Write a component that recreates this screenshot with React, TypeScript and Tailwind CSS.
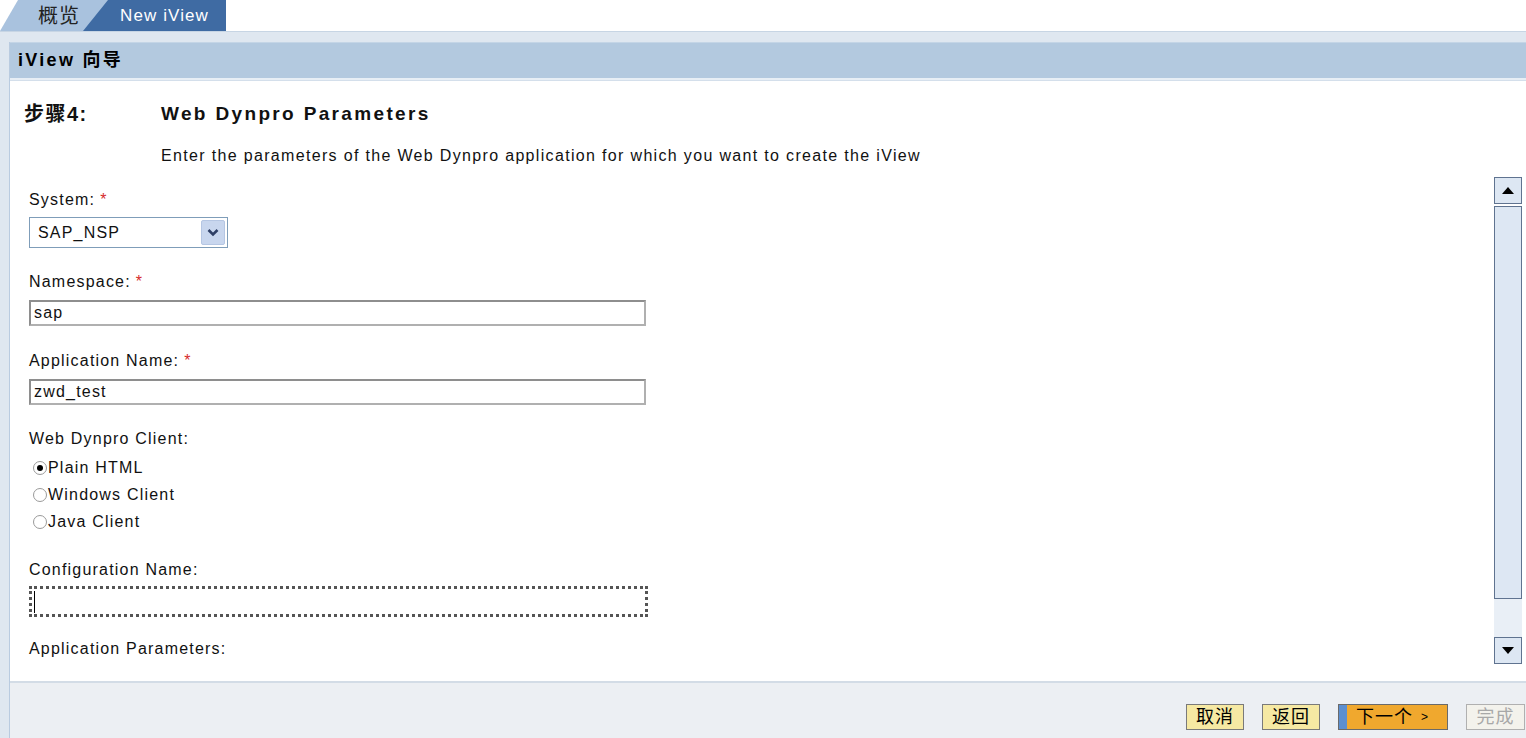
import React from "react";

const F = { fontFamily: '"Liberation Sans", "Noto Sans CJK SC", Arial, sans-serif' };

function Star() {
  return <span className="text-[#d62b2b] ml-[5px]">*</span>;
}

function Radio({ checked, label }: { checked?: boolean; label: string }) {
  return (
    <div className="flex items-center h-[27px]">
      <span className="relative w-[14px] h-[14px] rounded-full border border-[#9a9a9a] bg-white flex items-center justify-center mr-[1px]">
        {checked && <span className="w-[6px] h-[6px] rounded-full bg-black" />}
      </span>
      <span>{label}</span>
    </div>
  );
}

export default function App() {
  return (
    <div className="w-[1526px] h-[738px] overflow-hidden bg-white flex flex-col text-[16px] tracking-[1.2px] text-[#111]" style={F}>
      {/* Tabs */}
      <div className="h-[31px] flex items-end relative bg-white shrink-0">
        <div className="absolute left-0 top-0 h-[31px] w-[110px] bg-[#a9c2de] [clip-path:polygon(0_100%,18px_0,100%_0,100%_100%)]" />
        <div className="absolute left-[38px] top-0 h-[31px] flex items-center text-[20px] tracking-[1px] text-[#222]">概览</div>
        <div className="absolute left-[83px] top-0 h-[31px] w-[143px] bg-[#3f6ba3] [clip-path:polygon(0_100%,25px_0,100%_0,100%_100%)]" />
        <div className="absolute left-[120px] top-0 h-[31px] flex items-center text-[17px] tracking-[1.1px] text-white">New iView</div>
      </div>

      <div className="flex-1 flex flex-col bg-[#dfe7f0] min-h-0">
        <div className="h-[11px] shrink-0 border-t border-[#c7d5e4]" />
        <div className="flex-1 flex min-h-0">
          <div className="w-[10px] shrink-0 bg-[#dfe7f0] border-r border-[#b9cbe0]" />
          <div className="flex-1 flex flex-col min-h-0">
            {/* header bar */}
            <div className="h-[38px] shrink-0 bg-[#b3c9df] border-t border-[#c4d5e6] border-b-2 border-b-[#e7eef5] flex items-center pl-[8px] font-bold text-[18px] tracking-[2.3px] text-black">
              iView 向导
            </div>
            {/* content */}
            <div className="flex-1 bg-white flex min-h-0 border-t border-[#d4dfeb]">
              <div className="flex-1 flex flex-col">
                <div className="flex items-center pl-[14px] pt-[22px] h-[44px] font-bold text-[19px] text-[#111]">
                  <span className="w-[137px] tracking-[1.5px] text-[20px]">步骤4:</span>
                  <span className="tracking-[2.35px]">Web Dynpro Parameters</span>
                </div>
                <div className="pl-[151px] mt-[21px] h-[20px] leading-[20px] tracking-[1.33px]">
                  Enter the parameters of the Web Dynpro application for which you want to create the iView
                </div>
                <div className="pl-[19px] flex flex-col">
                  <div className="mt-[24px] h-[20px] leading-[20px]">System:<Star /></div>
                  <div className="mt-[7px] w-[199px] h-[31px] border border-[#7f9db9] bg-white flex items-center justify-between pl-[8px] pr-[2px]">
                    <span>SAP_NSP</span>
                    <span className="w-[24px] h-[25px] bg-[#c8d6ee] border border-[#b5c6e3] rounded-[2px] flex items-center justify-center">
                      <svg width="12" height="9" viewBox="0 0 12 9"><path d="M1.5 2 L6 6.5 L10.5 2" stroke="#2e3f66" strokeWidth="2.6" fill="none" /></svg>
                    </span>
                  </div>

                  <div className="mt-[24px] h-[20px] leading-[20px]">Namespace:<Star /></div>
                  <div className="mt-[8px] w-[617px] h-[26px] border-2 border-[#8e8e8e] border-r-[#b0b0b0] border-b-[#b0b0b0] bg-white flex items-center pl-[3px]">sap</div>

                  <div className="mt-[25px] h-[20px] leading-[20px]">Application Name:<Star /></div>
                  <div className="mt-[8px] w-[617px] h-[26px] border-2 border-[#8e8e8e] border-r-[#b0b0b0] border-b-[#b0b0b0] bg-white flex items-center pl-[3px]">zwd_test</div>

                  <div className="mt-[24px] h-[20px] leading-[20px]">Web Dynpro Client:</div>
                  <div className="mt-[5px] flex flex-col pl-[4px]">
                    <Radio checked label="Plain HTML" />
                    <Radio label="Windows Client" />
                    <Radio label="Java Client" />
                  </div>

                  <div className="mt-[25px] h-[20px] leading-[20px]">Configuration Name:</div>
                  <div className="mt-[6px] w-[619px] h-[31px] border-[3px] border-dotted border-[#555] bg-white flex items-center pl-[2px]">
                    <span className="w-[1px] h-[22px] bg-black" />
                  </div>

                  <div className="mt-[22px] h-[20px] leading-[20px]">Application Parameters:</div>
                </div>
              </div>
              {/* scrollbar */}
              <div className="w-[28px] mr-[4px] mt-[96px] mb-[17px] flex flex-col shrink-0">
                <div className="h-[27px] border border-[#5f7390] bg-[#dde7f3] flex items-center justify-center">
                  <svg width="12" height="7" viewBox="0 0 12 7"><path d="M0 7 L6 0 L12 7 Z" fill="#000" /></svg>
                </div>
                <div className="mt-[2px] h-[393px] border border-[#5f7390] bg-[#dde7f3]" />
                <div className="flex-1 bg-[#e9eff6]" />
                <div className="h-[27px] border border-[#5f7390] bg-[#dde7f3] flex items-center justify-center">
                  <svg width="12" height="7" viewBox="0 0 12 7"><path d="M0 0 L12 0 L6 7 Z" fill="#000" /></svg>
                </div>
              </div>
            </div>
            {/* footer */}
            <div className="h-[57px] shrink-0 bg-[#eceff3] border-t-2 border-[#d3dce6] flex items-start justify-end pt-[21px] gap-[18px] pr-[1px]">
              <div className="h-[26px] w-[58px] border border-[#7a7a7a] bg-[#f6e9a3] flex items-center justify-center text-[18px] tracking-[1px] text-black">取消</div>
              <div className="h-[26px] w-[58px] border border-[#7a7a7a] bg-[#f6e9a3] flex items-center justify-center text-[18px] tracking-[1px] text-black">返回</div>
              <div className="h-[26px] w-[110px] border border-[#6a6a6a] bg-[#f0a82e] flex items-center text-[18px] tracking-[1px] text-black">
                <span className="w-[8px] h-full bg-[#5c8fd0]" />
                <span className="ml-[9px]">下一个</span>
                <span className="ml-[8px] text-[12px]">&gt;</span>
              </div>
              <div className="h-[26px] w-[59px] border border-[#b0b0b0] bg-[#f3f2ec] flex items-center justify-center text-[18px] tracking-[1px] text-[#a8a8a8]">完成</div>
            </div>
          </div>
        </div>
      </div>
    </div>
  );
}
